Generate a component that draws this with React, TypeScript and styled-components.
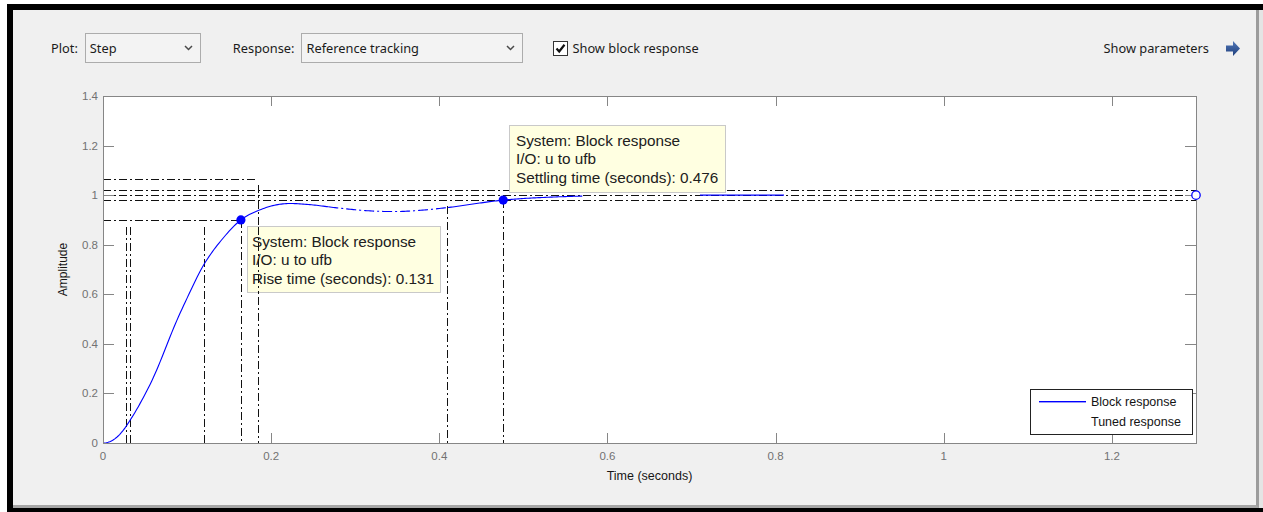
import React from "react";
import styled, { createGlobalStyle } from "styled-components";

const GlobalStyle = createGlobalStyle`
  html, body {
    margin: 0;
    padding: 0;
    background: #fff;
  }
  body {
    font-family: "Noto Sans", "Open Sans", sans-serif;
  }
`;

// plot geometry, in page pixels
const X0 = 103;
const X1 = 1196;
const Y0 = 443;
const Y1 = 96;
const T_MAX = 1.3;
const A_MAX = 1.4;

const sx = (t: number) => X0 + (t * (X1 - X0)) / T_MAX;
const sy = (a: number) => Y0 - (a * (Y0 - Y1)) / A_MAX;

// step response of the closed loop, sampled by hand
const KNOTS: [number, number][] = [
  [0, 0],
  [0.01, 0.008],
  [0.02, 0.035],
  [0.03, 0.08],
  [0.045, 0.165],
  [0.062, 0.28],
  [0.086, 0.48],
  [0.105, 0.62],
  [0.12, 0.72],
  [0.14, 0.815],
  [0.164, 0.9],
  [0.19, 0.945],
  [0.215, 0.965],
  [0.245, 0.962],
  [0.28, 0.948],
  [0.32, 0.936],
  [0.36, 0.935],
  [0.41, 0.95],
  [0.476, 0.98],
  [0.54, 0.993],
  [0.62, 0.999],
  [0.7, 1.0],
  [0.9, 1.0],
];

const SLOPES = KNOTS.map((_, i) => {
  if (i === 0 || i === KNOTS.length - 1) return 0;
  const a = KNOTS[i - 1];
  const b = KNOTS[i + 1];
  return (b[1] - a[1]) / (b[0] - a[0]);
});

function amp(t: number) {
  let i = 0;
  while (i < KNOTS.length - 2 && t > KNOTS[i + 1][0]) i++;
  const [t0, y0] = KNOTS[i];
  const [t1, y1] = KNOTS[i + 1];
  const h = t1 - t0;
  const s = (t - t0) / h;
  const s2 = s * s;
  const s3 = s2 * s;
  return (
    (2 * s3 - 3 * s2 + 1) * y0 +
    (s3 - 2 * s2 + s) * h * SLOPES[i] +
    (-2 * s3 + 3 * s2) * y1 +
    (s3 - s2) * h * SLOPES[i + 1]
  );
}

function trace(from: number, to: number) {
  const pts: string[] = [];
  for (let t = from; t <= to + 1e-9; t += 0.002) {
    pts.push(`${sx(t).toFixed(2)} ${sy(amp(t)).toFixed(2)}`);
  }
  return "M" + pts.join(" L");
}

const DASH_DOT = "8 3 2 3";

const H_GUIDES = [
  { a: 1.065, to: 256 },
  { a: 1.02, to: X1 },
  { a: 1.0, to: X1 },
  { a: 0.98, to: X1 },
  { a: 0.9, to: 241 },
];

const V_GUIDES = [
  { x: 126, from: 227 },
  { x: 130, from: 227 },
  { x: 204, from: 227 },
  { x: 241, from: 220 },
  { x: 258, from: 185 },
  { x: 447, from: 206 },
  { x: 503, from: 200 },
];

const X_TICKS = [0, 0.2, 0.4, 0.6, 0.8, 1, 1.2];
const Y_TICKS = [0, 0.2, 0.4, 0.6, 0.8, 1, 1.2, 1.4];

const Screen = styled.div`
  width: 1263px;
  height: 512px;
  box-sizing: border-box;
  padding: 4px 0 0 7px;
  overflow: hidden;
  background: #fff;
`;

const Frame = styled.div`
  display: flex;
  height: 508px;
  box-sizing: border-box;
  border-top: 6px solid #000;
  border-left: 6px solid #000;
  border-bottom: 4px solid #000;
  background: #e4e4e4;
`;

const Panel = styled.div`
  display: flex;
  flex-direction: column;
  width: 1243px;
  height: 495px;
  background: #f0f0f0;
  border-right: 3px solid #9c9c9c;
  border-bottom: 3px solid #a6a6a6;
`;

const Toolbar = styled.div`
  display: flex;
  align-items: center;
  height: 30px;
  margin: 23px 0 12px;
  padding: 0 16px 0 38px;
  font-size: 12.8px;
  color: #1b1b1b;
`;

const Label = styled.span<{ $gap?: number }>`
  margin-left: ${(p) => p.$gap ?? 0}px;
  margin-right: 7px;
  white-space: nowrap;
`;

const Select = styled.div<{ $width: number }>`
  display: flex;
  align-items: center;
  justify-content: space-between;
  width: ${(p) => p.$width}px;
  height: 30px;
  box-sizing: border-box;
  padding: 0 7px 0 4px;
  border: 1px solid #acacac;
  background: #f3f3f3;
  white-space: nowrap;
`;

const CheckRow = styled.label`
  display: flex;
  align-items: center;
  gap: 4px;
  margin-left: 30px;
  white-space: nowrap;
`;

const CheckBox = styled.span`
  display: flex;
  align-items: center;
  justify-content: center;
  width: 15px;
  height: 15px;
  box-sizing: border-box;
  border: 1px solid #333;
  background: #fff;
`;

const Spacer = styled.div`
  flex: 1;
`;

const ParamsLink = styled.div`
  display: flex;
  align-items: center;
  gap: 17px;
  white-space: nowrap;
`;

const Chart = styled.svg`
  display: block;
  width: 1243px;
  height: 420px;
  font-family: "Liberation Sans", Arial, sans-serif;
`;

const Chevron = () => (
  <svg width="9" height="6" viewBox="0 0 9 6">
    <polyline points="1,1 4.5,4.5 8,1" fill="none" stroke="#4a4a4a" strokeWidth="1.5" />
  </svg>
);

const Check = () => (
  <svg width="11" height="11" viewBox="0 0 11 11">
    <polyline points="1.5,5.5 4.2,8.5 9.5,1.8" fill="none" stroke="#111" strokeWidth="2.2" />
  </svg>
);

const ArrowRight = () => (
  <svg width="14" height="15" viewBox="0 0 14 15">
    <defs>
      <linearGradient id="arrowFill" x1="0" y1="0" x2="0" y2="1">
        <stop offset="0" stopColor="#5177b8" />
        <stop offset="1" stopColor="#1f3f7c" />
      </linearGradient>
    </defs>
    <path d="M0 4.5 H7 V0 L14 7.5 L7 15 V10.5 H0 Z" fill="url(#arrowFill)" />
  </svg>
);

type TipProps = { x: number; y: number; w: number; h: number; lines: string[]; pad: number };

const DataTip = ({ x, y, w, h, lines, pad }: TipProps) => (
  <g>
    <rect x={x + 0.5} y={y + 0.5} width={w} height={h} fill="#ffffe1" stroke="#c9c9c9" />
    {lines.map((line, i) => (
      <text
        key={line}
        x={x + pad}
        y={y + 15 + i * 18.7}
        dominantBaseline="central"
        fontSize="15.3"
        fill="#202020"
      >
        {line}
      </text>
    ))}
  </g>
);

const StepPlot = () => (
  <Chart viewBox="13 75 1243 420">
    <rect x={X0} y={Y1} width={X1 - X0} height={Y0 - Y1} fill="#fff" />

    {/* characteristic guides */}
    <g stroke="#111" strokeWidth="1" strokeDasharray={DASH_DOT} shapeRendering="crispEdges">
      {H_GUIDES.map((g) => (
        <line key={g.a} x1={X0} y1={Math.round(sy(g.a)) + 0.5} x2={g.to} y2={Math.round(sy(g.a)) + 0.5} />
      ))}
      {V_GUIDES.map((g) => (
        <line key={g.x} x1={g.x + 0.5} y1={g.from} x2={g.x + 0.5} y2={Y0} />
      ))}
    </g>

    {/* block response */}
    <g fill="none" stroke="#0000ff" strokeWidth="1.1">
      <path d={trace(0, 0.268)} />
      <path d={trace(0.268, 0.41)} strokeDasharray="10 3 2 3" />
      <path d={trace(0.41, 0.57)} />
      <path d={trace(0.71, 0.81)} />
    </g>

    {/* axes box, ticks, labels */}
    <g stroke="#868686" strokeWidth="1" shapeRendering="crispEdges">
      <rect x={X0 + 0.5} y={Y1 + 0.5} width={X1 - X0} height={Y0 - Y1} fill="none" />
      {X_TICKS.slice(1).map((t) => (
        <g key={t}>
          <line x1={Math.round(sx(t)) + 0.5} y1={Y0} x2={Math.round(sx(t)) + 0.5} y2={Y0 - 10} />
          <line x1={Math.round(sx(t)) + 0.5} y1={Y1} x2={Math.round(sx(t)) + 0.5} y2={Y1 + 10} />
        </g>
      ))}
      {Y_TICKS.slice(1, -1).map((a) => (
        <g key={a}>
          <line x1={X0} y1={Math.round(sy(a)) + 0.5} x2={X0 + 11} y2={Math.round(sy(a)) + 0.5} />
          <line x1={X1} y1={Math.round(sy(a)) + 0.5} x2={X1 - 11} y2={Math.round(sy(a)) + 0.5} />
        </g>
      ))}
    </g>
    <g fontSize="11.5" fill="#727272">
      {X_TICKS.map((t) => (
        <text key={t} x={sx(t)} y={456} textAnchor="middle" dominantBaseline="central">
          {String(t)}
        </text>
      ))}
      {Y_TICKS.map((a) => (
        <text key={a} x={98} y={sy(a)} textAnchor="end" dominantBaseline="central">
          {String(a)}
        </text>
      ))}
    </g>
    <text x={(X0 + X1) / 2} y={476} textAnchor="middle" dominantBaseline="central" fontSize="12.5" fill="#161616">
      Time (seconds)
    </text>
    <text
      x={63}
      y={(Y0 + Y1) / 2}
      textAnchor="middle"
      dominantBaseline="central"
      fontSize="12"
      fill="#161616"
      transform={`rotate(-90 63 ${(Y0 + Y1) / 2})`}
    >
      Amplitude
    </text>

    {/* data tips */}
    <DataTip
      x={509}
      y={125}
      w={216}
      h={67}
      pad={7}
      lines={["System: Block response", "I/O: u to ufb", "Settling time (seconds): 0.476"]}
    />
    <DataTip
      x={247}
      y={226}
      w={193}
      h={66}
      pad={5}
      lines={["System: Block response", "I/O: u to ufb", "Rise time (seconds): 0.131"]}
    />
    {/* peak-time guide runs over the rise tip */}
    <line x1={258.5} y1={227} x2={258.5} y2={293} stroke="#111" strokeDasharray={DASH_DOT} shapeRendering="crispEdges" />

    {/* markers */}
    <circle cx={sx(0.164)} cy={sy(0.9)} r={4.6} fill="#0000ff" />
    <circle cx={sx(0.476)} cy={sy(0.98)} r={4.6} fill="#0000ff" />
    <circle cx={X1} cy={sy(1)} r={4.2} fill="#fff" stroke="#0000ff" strokeWidth="1.3" />

    {/* legend */}
    <rect x={1030.5} y={389.5} width={162} height={45} fill="#fff" stroke="#222" shapeRendering="crispEdges" />
    <rect x={1039} y={401} width={47} height={1.4} fill="#0000ff" />
    <g fontSize="12.5" fill="#141414">
      <text x={1091} y={402} dominantBaseline="central">
        Block response
      </text>
      <text x={1091} y={422} dominantBaseline="central">
        Tuned response
      </text>
    </g>
  </Chart>
);

export default function App() {
  return (
    <>
      <GlobalStyle />
      <Screen>
        <Frame>
          <Panel>
            <Toolbar>
              <Label>Plot:</Label>
              <Select $width={116}>
                Step
                <Chevron />
              </Select>
              <Label $gap={32}>Response:</Label>
              <Select $width={222}>
                Reference tracking
                <Chevron />
              </Select>
              <CheckRow>
                <CheckBox>
                  <Check />
                </CheckBox>
                Show block response
              </CheckRow>
              <Spacer />
              <ParamsLink>
                Show parameters
                <ArrowRight />
              </ParamsLink>
            </Toolbar>
            <StepPlot />
          </Panel>
        </Frame>
      </Screen>
    </>
  );
}
